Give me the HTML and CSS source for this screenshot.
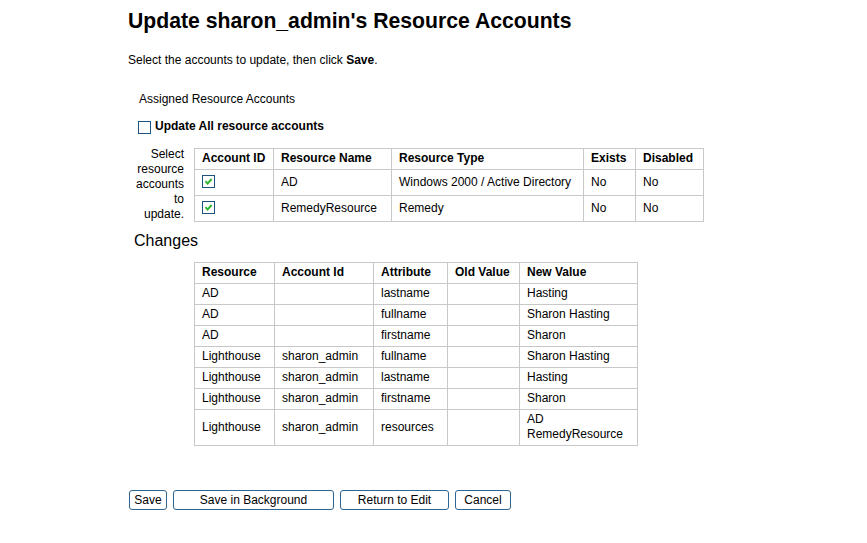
FILE: index.html
```html
<!DOCTYPE html>
<html>
<head>
<meta charset="utf-8">
<link rel="stylesheet" href="styles.css">
</head>
<body>
<div class="page">
  <h1 class="title">Update sharon_admin's Resource Accounts</h1>
  <p class="intro">Select the accounts to update, then click <b>Save</b>.</p>
  <div class="section-label">Assigned Resource Accounts</div>
  <div class="update-all"><span class="cb"></span><b>Update All resource accounts</b></div>
  <div class="select-row">
    <div class="side-label">Select<br>resource<br>accounts<br>to<br>update.</div>
    <table class="grid accounts">
      <thead>
        <tr><th class="c1">Account ID</th><th class="c2">Resource Name</th><th class="c3">Resource Type</th><th class="c4">Exists</th><th class="c5">Disabled</th></tr>
      </thead>
      <tbody>
        <tr><td><span class="cb checked"><svg viewBox="0 0 11 11" width="11" height="11"><path d="M2.5 5.2 L4.6 7.6 L8.6 3" fill="none" stroke="#2fb52f" stroke-width="2"/></svg></span></td><td>AD</td><td>Windows 2000 / Active Directory</td><td>No</td><td>No</td></tr>
        <tr><td><span class="cb checked"><svg viewBox="0 0 11 11" width="11" height="11"><path d="M2.5 5.2 L4.6 7.6 L8.6 3" fill="none" stroke="#2fb52f" stroke-width="2"/></svg></span></td><td>RemedyResource</td><td>Remedy</td><td>No</td><td>No</td></tr>
      </tbody>
    </table>
  </div>
  <h2 class="changes-title">Changes</h2>
  <table class="grid changes">
    <thead>
      <tr><th class="d1">Resource</th><th class="d2">Account Id</th><th class="d3">Attribute</th><th class="d4">Old Value</th><th class="d5">New Value</th></tr>
    </thead>
    <tbody>
      <tr><td>AD</td><td></td><td>lastname</td><td></td><td>Hasting</td></tr>
      <tr><td>AD</td><td></td><td>fullname</td><td></td><td>Sharon Hasting</td></tr>
      <tr><td>AD</td><td></td><td>firstname</td><td></td><td>Sharon</td></tr>
      <tr><td>Lighthouse</td><td>sharon_admin</td><td>fullname</td><td></td><td>Sharon Hasting</td></tr>
      <tr><td>Lighthouse</td><td>sharon_admin</td><td>lastname</td><td></td><td>Hasting</td></tr>
      <tr><td>Lighthouse</td><td>sharon_admin</td><td>firstname</td><td></td><td>Sharon</td></tr>
      <tr><td>Lighthouse</td><td>sharon_admin</td><td>resources</td><td></td><td>AD<br>RemedyResource</td></tr>
    </tbody>
  </table>
  <div class="buttons">
    <button class="btn b-save">Save</button>
    <button class="btn b-bg">Save in Background</button>
    <button class="btn b-ret">Return to Edit</button>
    <button class="btn b-cancel">Cancel</button>
  </div>
</div>
</body>
</html>
```

FILE: styles.css
```css
html, body {
  margin: 0;
  padding: 0;
  background: #ffffff;
}
body {
  font-family: "Liberation Sans", Arial, sans-serif;
  font-size: 12px;
  color: #000000;
}
.page {
  padding-left: 128px;
  padding-top: 9px;
}
.title {
  margin: 0;
  font-size: 21.2px;
  line-height: 24px;
  font-weight: bold;
}
.intro {
  margin: 20px 0 0 0;
  line-height: 15px;
}
.section-label {
  margin: 24px 0 0 11px;
  line-height: 15px;
}
.update-all {
  margin: 12px 0 0 10px;
  display: flex;
  align-items: center;
  line-height: 15px;
}
.update-all .cb {
  margin: 2px 4px 0 0;
}
.cb {
  display: inline-block;
  box-sizing: border-box;
  width: 13px;
  height: 13px;
  border: 1px solid #1c5180;
  background: #ffffff;
  vertical-align: top;
}
.cb svg {
  display: block;
}
.cb.checked {
  margin: 3px 0 4px 0;
}
.select-row {
  margin-top: 14px;
  display: flex;
  align-items: flex-start;
}
.side-label {
  width: 56px;
  margin-right: 10px;
  margin-top: -1px;
  text-align: right;
  line-height: 15px;
}
.grid {
  border-collapse: collapse;
  border: 1px solid #c8c8c8;
}
.grid th, .grid td {
  border: 1px solid #c8c8c8;
  padding: 2px 7px 3px 7px;
  line-height: 15px;
  text-align: left;
  vertical-align: middle;
  white-space: nowrap;
}
.grid th {
  font-weight: bold;
}
.accounts td {
  height: 20px;
}
.accounts .c1 { width: 64px; }
.accounts .c2 { width: 103px; }
.accounts .c3 { width: 177px; }
.accounts .c4 { width: 37px; }
.accounts .c5 { width: 53px; }
.changes-title {
  margin: 9px 0 0 6px;
  font-size: 16px;
  line-height: 19px;
  font-weight: normal;
}
.changes {
  margin: 12px 0 0 66px;
}
.changes .d1 { width: 65px; }
.changes .d2 { width: 84px; }
.changes .d3 { width: 59px; }
.changes .d4 { width: 57px; }
.changes .d5 { width: 103px; }
.buttons {
  margin-top: 44px;
  margin-left: 1px;
  display: flex;
  gap: 6px;
}
.btn {
  box-sizing: border-box;
  height: 20px;
  padding: 0;
  font-family: "Liberation Sans", Arial, sans-serif;
  font-size: 12px;
  color: #000000;
  background: #ffffff;
  border: 1px solid #2d6594;
  border-radius: 3px;
}
.b-save { width: 38px; }
.b-bg { width: 161px; }
.b-ret { width: 109px; }
.b-cancel { width: 56px; }
```
